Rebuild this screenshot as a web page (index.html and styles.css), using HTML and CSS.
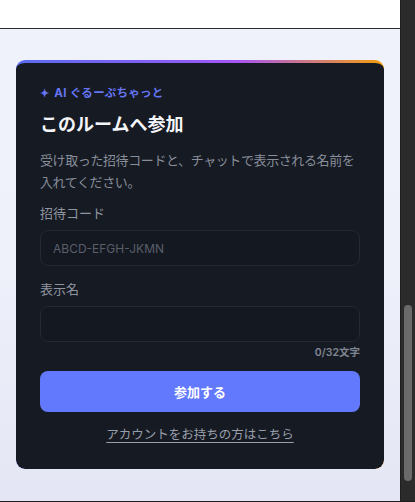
FILE: index.html
```html
<!DOCTYPE html>
<html lang="ja">
<head>
<meta charset="utf-8">
<title>このルームへ参加</title>
<link rel="stylesheet" href="styles.css">
</head>
<body>
<div class="frame">
  <div class="page">
    <header class="topbar"></header>
    <main class="stage">
      <section class="card">
        <div class="brand"><span class="spark">✦</span> AI ぐるーぷちゃっと</div>
        <h1 class="title">このルームへ参加</h1>
        <p class="desc">受け取った招待コードと、チャットで表示される名前を入れてください。</p>
        <label class="label" for="code">招待コード</label>
        <input class="field" id="code" type="text" placeholder="ABCD-EFGH-JKMN">
        <label class="label label-gap" for="name">表示名</label>
        <input class="field" id="name" type="text">
        <div class="counter">0/32文字</div>
        <button class="submit" type="button">参加する</button>
        <a class="alt-link" href="#">アカウントをお持ちの方はこちら</a>
      </section>
    </main>
  </div>
  <div class="scrollbar"><div class="thumb"></div></div>
</div>
<div class="hbar"></div>
</body>
</html>
```

FILE: styles.css
```css
* { box-sizing: border-box; }
html, body { margin: 0; padding: 0; }
body {
  width: 415px;
  height: 502px;
  display: flex;
  flex-direction: column;
  font-family: "Inter", "Noto Sans CJK JP", sans-serif;
  overflow: hidden;
}
.frame {
  flex: 1;
  display: flex;
  min-height: 0;
}
.page {
  width: 400px;
  display: flex;
  flex-direction: column;
}
.topbar {
  height: 29px;
  background: #ffffff;
  border-bottom: 1px solid #2a2d33;
}
.stage {
  flex: 1;
  padding: 31px 16px 0;
  background: linear-gradient(180deg, #f0f2fb 0%, #eef0fa 50%, #e4e6f5 100%);
}
.card {
  background: #161a23;
  border-radius: 9px;
  border-top: 3px solid transparent;
  background-image: linear-gradient(#161a23, #161a23), linear-gradient(90deg, #5b6cf0 0%, #8b5cf6 45%, #a855f7 60%, #f59e0b 100%);
  background-origin: border-box;
  background-clip: padding-box, border-box;
  padding: 22px 24px 25px;
  display: flex;
  flex-direction: column;
}
.brand {
  font-size: 11.5px;
  font-weight: 700;
  line-height: 16px;
  color: #6575f4;
  letter-spacing: 0.3px;
}
.spark { font-size: 11px; margin-right: 2px; }
.title {
  margin: 11px 0 0;
  font-size: 18px;
  font-weight: 700;
  line-height: 26px;
  color: #f4f5f8;
}
.desc {
  margin: 11px 0 0;
  font-size: 13px;
  line-height: 22px;
  letter-spacing: -0.4px;
  color: #888e9a;
}
.label {
  margin-top: 11px;
  font-size: 13px;
  line-height: 18px;
  color: #8f95a0;
}
.label-gap { margin-top: 14px; }
.field {
  margin-top: 8px;
  height: 36px;
  width: 100%;
  background: #141820;
  border: 1px solid #232935;
  border-radius: 8px;
  padding: 0 12px;
  font-family: inherit;
  font-size: 12px;
  color: #e5e7eb;
  outline: none;
}
.field::placeholder { color: #595f6b; }
.counter {
  margin-top: 4px;
  text-align: right;
  font-size: 10.5px;
  font-weight: 600;
  line-height: 14px;
  color: #7f8591;
}
.submit {
  margin-top: 11px;
  height: 41px;
  border: none;
  border-radius: 8px;
  background: #6379fd;
  color: #ffffff;
  font-family: inherit;
  font-size: 13px;
  font-weight: 700;
}
.alt-link {
  margin-top: 14px;
  align-self: center;
  font-size: 12.5px;
  line-height: 18px;
  color: #989eaa;
  text-decoration: underline;
  text-underline-offset: 3px;
}
.scrollbar {
  width: 15px;
  background: #2b2b2b;
  border-left: 1px solid #1f1f1f;
  padding-top: 305px;
  display: flex;
  justify-content: center;
}
.thumb {
  width: 8px;
  height: 176px;
  border-radius: 4px;
  background: #6a6a6a;
}
.hbar {
  height: 1px;
  background: #1c1c1c;
}
```
